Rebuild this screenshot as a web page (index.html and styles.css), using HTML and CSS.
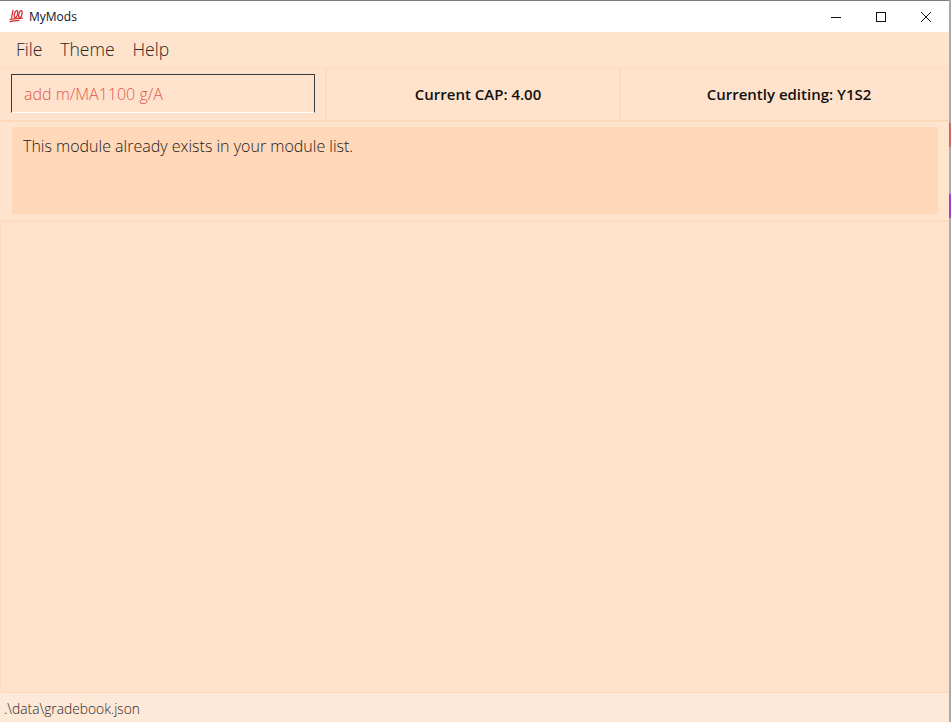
FILE: index.html
```html
<!DOCTYPE html>
<html lang="en">
<head>
<meta charset="utf-8">
<title>MyMods</title>
<link rel="stylesheet" href="styles.css">
</head>
<body>
<div class="desktop">
  <div class="window">
    <header class="titlebar">
      <div class="app-id">
        <svg class="app-icon" width="16" height="16" viewBox="0 0 16 16" aria-hidden="true">
          <g fill="none" stroke="#d3242a" stroke-width="1.2" stroke-linecap="round">
            <path d="M5 1.4 3.6 8.6"/>
            <ellipse cx="8" cy="5" rx="1.5" ry="3.6" transform="rotate(14 8 5)"/>
            <ellipse cx="12.4" cy="5" rx="1.5" ry="3.6" transform="rotate(14 12.4 5)"/>
            <path d="M2 10.4C6 9.6 10 9.3 14.4 9.2"/>
            <path d="M2 12.6C5 11.8 8 11.5 11 11.4"/>
          </g>
        </svg>
        <span class="app-name">MyMods</span>
      </div>
      <div class="controls">
        <span class="control"><svg width="12" height="12" viewBox="0 0 12 12"><path d="M1 6.5h10" stroke="#111" fill="none"/></svg></span>
        <span class="control"><svg width="12" height="12" viewBox="0 0 12 12"><rect x="1.5" y="1.5" width="9" height="9" stroke="#111" fill="none"/></svg></span>
        <span class="control"><svg width="12" height="12" viewBox="0 0 12 12"><path d="M1 1l10 10M11 1 1 11" stroke="#111" fill="none"/></svg></span>
      </div>
    </header>
    <nav class="menubar">
      <span class="menu-item">File</span>
      <span class="menu-item">Theme</span>
      <span class="menu-item">Help</span>
    </nav>
    <section class="toolbar">
      <div class="cell cell-input">
        <div class="command-box">add m/MA1100 g/A</div>
      </div>
      <div class="cell cell-cap">Current CAP: 4.00</div>
      <div class="cell cell-sem">Currently editing: Y1S2</div>
    </section>
    <section class="result-pane">
      <div class="result-box">This module already exists in your module list.</div>
    </section>
    <main class="content"></main>
    <footer class="statusbar">.\data\gradebook.json</footer>
  </div>
  <span class="behind behind-red"></span>
  <span class="behind behind-purple"></span>
</div>
</body>
</html>
```
FILE: styles.css
```css
* { box-sizing: border-box; }
html, body { margin: 0; height: 100%; overflow: hidden; }
body { background: #a9a9a9; font-family: "Open Sans", "Noto Sans", sans-serif; }
.desktop { position: relative; width: 951px; height: 722px; }
.window {
  display: flex;
  flex-direction: column;
  width: 949px;
  height: 722px;
  border-top: 1px solid #7c7c7c;
  background: #fee3cd;
}
.titlebar {
  display: flex;
  flex: none;
  justify-content: space-between;
  align-items: center;
  height: 31px;
  background: #fff;
}
.app-id { display: flex; align-items: center; padding-left: 8px; gap: 5px; }
.app-icon { display: block; }
.app-name { font-size: 12px; color: #10102a; font-family: "Open Sans", sans-serif; }
.controls { display: flex; padding-right: 1px; }
.control { display: flex; width: 45px; height: 31px; align-items: center; justify-content: center; }
.menubar {
  display: flex;
  flex: none;
  height: 35px;
  align-items: center;
  padding: 0 0 2px 16px;
  gap: 18px;
  background: #fee3cd;
}
.menu-item { font-size: 17.5px; font-weight: 300; color: #2c2723; }
.toolbar {
  display: flex;
  flex: none;
  height: 55px;
  padding: 0 0 0 1px;
  border-top: 1px solid #fddbbf;
  border-bottom: 2px solid #fdd9bb;
  background: #fee2cc;
}
.cell {
  display: flex;
  align-items: center;
  justify-content: center;
  font-size: 15px;
  font-weight: 600;
  color: #111;
}
.cell-input {
  width: 326px;
  border-right: 2px solid #fddbbf;
  justify-content: flex-start;
  align-items: flex-start;
  padding: 6px 0 0 10px;
}
.cell-cap { width: 294px; padding-left: 10px; border-right: 2px solid #fddbbf; }
.cell-sem { flex: 1; padding-left: 8px; }
.command-box {
  width: 304px;
  height: 39px;
  padding: 8px 0 0 12px;
  border: 1px solid #3b3b3b;
  border-bottom: 1px solid #fff;
  font-size: 16px;
  font-weight: 300;
  color: #e2584f;
}
.result-pane {
  flex: none;
  height: 100px;
  padding: 5px 11px 5px 12px;
  border-bottom: 2px solid #fddbbf;
  background: #fee3cd;
}
.result-box {
  height: 87px;
  padding: 8px 11px;
  border-radius: 2px;
  background: #fed8b8;
  font-size: 16px;
  font-weight: 300;
  line-height: 22px;
  color: #1f1a1a;
}
.content {
  flex: 1;
  border-left: 1px solid #fddbbf;
  background: #fee2cc;
}
.statusbar {
  flex: none;
  height: 30px;
  padding: 6px 0 0 4px;
  border-top: 1px solid #fdd9bb;
  background: #fee8d8;
  font-size: 13.8px;
  font-weight: 300;
  color: #2c2723;
}
.behind { position: absolute; right: 0; width: 2px; }
.behind-red { top: 123px; height: 24px; background: #c86a66; }
.behind-purple { top: 194px; height: 24px; background: #a23fd0; }
```
